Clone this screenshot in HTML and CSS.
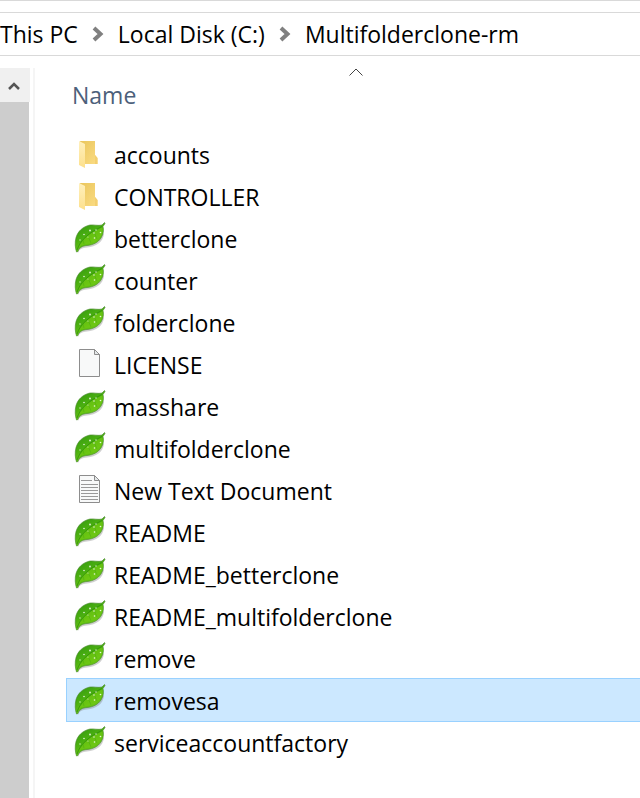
FILE: index.html
```html
<!DOCTYPE html>
<html lang="en">
<head>
    <meta charset="UTF-8">
    <meta name="viewport" content="width=device-width, initial-scale=1.0">
    <title>Multifolderclone-rm</title>
    <link rel="stylesheet" href="styles.css">
</head>
<body>
    <!-- shared icons -->
    <svg class="icon-defs" width="0" height="0" aria-hidden="true">
        <defs>
            <linearGradient id="leaf-fill" x1="0" y1="0" x2="0.6" y2="1">
                <stop offset="0" stop-color="#2f9312"/>
                <stop offset="0.5" stop-color="#4bb010"/>
                <stop offset="1" stop-color="#7fd41a"/>
            </linearGradient>
            <linearGradient id="folder-back" x1="0" y1="0" x2="1" y2="1">
                <stop offset="0" stop-color="#eac65c"/>
                <stop offset="1" stop-color="#fbdc84"/>
            </linearGradient>
            <linearGradient id="folder-flap" x1="0" y1="0" x2="0" y2="1">
                <stop offset="0" stop-color="#fff0bd"/>
                <stop offset="1" stop-color="#fde08c"/>
            </linearGradient>
        </defs>
        <symbol id="folder" viewBox="0 0 32 32">
            <path d="M6 3H21V17L23.5 20V26H10Z" fill="url(#folder-back)"/>
            <path d="M21 17L23.5 20V26H21Z" fill="#f3cf70"/>
            <path d="M5 3L11 6V30L5 27Z" fill="url(#folder-flap)"/>
        </symbol>
        <symbol id="leaf" viewBox="0 0 32 32">
            <path d="M4 31C5 27 8 26 13 25.5C22 25 29 20 30 12L27 8L4 26Z" fill="#777" opacity="0.35"/>
            <path d="M2.5 30C1 26 0.8 20 2 15.500C4 9 9 4.500 16 3C20 2.500 24 4 28 3L30.500 0.500L31 1.500L29 4.500C30 8 29.500 12 27 16C24 20.500 19 23 13 23.500C8.500 24 5 25.500 4 29.500Z" fill="url(#leaf-fill)" stroke="#47852c" stroke-width="0.6"/>
            <path d="M28.500 5C29 9 28.500 12.500 25.500 15.500C22 20 17 21.500 11 22.500C8 23 5.500 24 4 25.500C7 19.500 11.500 14.500 17 11C21 8.500 25 7.500 28.500 5Z" fill="#74cc12" opacity="0.6"/>
            <path d="M3 28C6 19 14 11 28 4.500" fill="none" stroke="#2b8a0c" stroke-width="0.9" opacity="0.8"/>
            <path d="M9 18L10 22M14 14L17 21M20 10L23 17" fill="none" stroke="#3ba00f" stroke-width="0.6" opacity="0.6"/>
            <g fill="#fff" opacity="0.85">
                <circle cx="16" cy="8.5" r="0.9"/>
                <circle cx="22" cy="8" r="0.7"/>
                <circle cx="10" cy="12.5" r="0.8"/>
                <circle cx="20" cy="11" r="0.8"/>
                <circle cx="26.500" cy="10.5" r="0.8"/>
                <circle cx="6" cy="18" r="0.7"/>
                <circle cx="14" cy="15" r="0.6"/>
                <circle cx="20.5" cy="16" r="0.8"/>
            </g>
        </symbol>
        <symbol id="file" viewBox="0 0 32 32">
            <path d="M5.5 1.5H20.5L25.5 6.5V28.5H5.5Z" fill="#f8f9f9" stroke="#8d8d8d"/>
            <path d="M20.5 1.5V6.5H25.5Z" fill="#e4e8e9" stroke="#8d8d8d"/>
        </symbol>
        <symbol id="text-file" viewBox="0 0 32 32">
            <use href="#file"/>
            <path d="M7 6.5H18M7 10.5H24M7 13.5H24M7 16.5H24M7 19.5H24M7 22.5H24M7 25.5H24" stroke="#999" fill="none"/>
        </symbol>
        <symbol id="chevron" viewBox="0 0 12 16">
            <path d="M2 2L8.5 8L2 14" fill="none" stroke="#808080" stroke-width="4"/>
        </symbol>
    </svg>

    <nav class="address-bar" aria-label="Path">
        <a href="#">This PC</a>
        <svg class="chevron"><use href="#chevron"/></svg>
        <a href="#">Local Disk (C:)</a>
        <svg class="chevron"><use href="#chevron"/></svg>
        <a href="#">Multifolderclone-rm</a>
    </nav>

    <main class="explorer">
        <div class="scrollbar">
            <button class="scroll-up" type="button" aria-label="Scroll up">
                <svg width="12" height="10" viewBox="0 0 12 10"><path d="M1 8L6 3L11 8" fill="none" stroke="#555" stroke-width="2.5"/></svg>
            </button>
            <div class="scroll-thumb"></div>
        </div>
        <table class="files">
            <thead>
                <tr>
                    <th scope="col" aria-sort="ascending">
                        <button class="sort" type="button">
                            <svg width="14" height="8" viewBox="0 0 14 8"><path d="M0.5 7.5L7 1L13.5 7.5" fill="none" stroke="#444"/></svg>
                            <span>Name</span>
                        </button>
                    </th>
                </tr>
            </thead>
            <tbody>
                <tr><td><div class="file"><svg><use href="#folder"/></svg>accounts</div></td></tr>
                <tr><td><div class="file"><svg><use href="#folder"/></svg>CONTROLLER</div></td></tr>
                <tr><td><div class="file"><svg><use href="#leaf"/></svg>betterclone</div></td></tr>
                <tr><td><div class="file"><svg><use href="#leaf"/></svg>counter</div></td></tr>
                <tr><td><div class="file"><svg><use href="#leaf"/></svg>folderclone</div></td></tr>
                <tr><td><div class="file"><svg><use href="#file"/></svg>LICENSE</div></td></tr>
                <tr><td><div class="file"><svg><use href="#leaf"/></svg>masshare</div></td></tr>
                <tr><td><div class="file"><svg><use href="#leaf"/></svg>multifolderclone</div></td></tr>
                <tr><td><div class="file"><svg><use href="#text-file"/></svg>New Text Document</div></td></tr>
                <tr><td><div class="file"><svg><use href="#leaf"/></svg>README</div></td></tr>
                <tr><td><div class="file"><svg><use href="#leaf"/></svg>README_betterclone</div></td></tr>
                <tr><td><div class="file"><svg><use href="#leaf"/></svg>README_multifolderclone</div></td></tr>
                <tr><td><div class="file"><svg><use href="#leaf"/></svg>remove</div></td></tr>
                <tr><td><div class="file selected"><svg><use href="#leaf"/></svg>removesa</div></td></tr>
                <tr><td><div class="file"><svg><use href="#leaf"/></svg>serviceaccountfactory</div></td></tr>
            </tbody>
        </table>
    </main>
</body>
</html>
```
FILE: styles.css
```css
* {
    box-sizing: border-box;
}
body {
    margin: 0;
    min-height: 100vh;
    display: flex;
    flex-direction: column;
    border-top: 1px solid #d9d9d9;
    background-color: #fff;
    color: #000;
    font-family: "Open Sans", "Noto Sans", sans-serif;
    font-size: 23px;
    line-height: 32px;
    overflow-x: hidden;
}
.icon-defs {
    position: absolute;
}
.address-bar {
    display: flex;
    align-items: center;
    height: 44px;
    margin-top: 11px;
    border-top: 1px solid #d9d9d9;
    border-bottom: 1px solid #d9d9d9;
    white-space: nowrap;
}
.address-bar a {
    color: #000;
    text-decoration: none;
}
.chevron {
    width: 12px;
    height: 16px;
    margin: 0 14px;
}
.explorer {
    flex: 1;
    display: flex;
}
.scrollbar {
    display: flex;
    flex-direction: column;
    flex: none;
    width: 35px;
    margin-top: 12px;
    border-right: 2px solid #f5f5f5;
}
.scroll-up {
    display: flex;
    align-items: center;
    justify-content: center;
    width: 30px;
    height: 34px;
    padding: 2px 3px 0 0;
    border: none;
    background-color: #f0f0f0;
}
.scroll-thumb {
    flex: 1;
    width: 29px;
    background-color: #cdcdcd;
}
.files {
    flex: 1;
    align-self: flex-start;
    margin-left: 32px;
    border-collapse: collapse;
}
.files th,
.files td {
    padding: 0;
}
.sort {
    display: flex;
    flex-direction: column;
    gap: 3px;
    width: 100%;
    height: 77px;
    padding: 12px 0 0 5px;
    border: none;
    background: none;
    color: #4c607a;
    font: inherit;
    font-weight: normal;
    text-align: left;
}
.sort svg {
    align-self: center;
}
.file {
    display: flex;
    align-items: center;
    gap: 8px;
    height: 42px;
    padding: 2px 0 0 7px;
    white-space: nowrap;
}
.file svg {
    width: 32px;
    height: 32px;
    margin-bottom: 2px;
}
.selected {
    background-color: #cce8ff;
    box-shadow: 0 0 0 1px #99d1ff;
}
```
